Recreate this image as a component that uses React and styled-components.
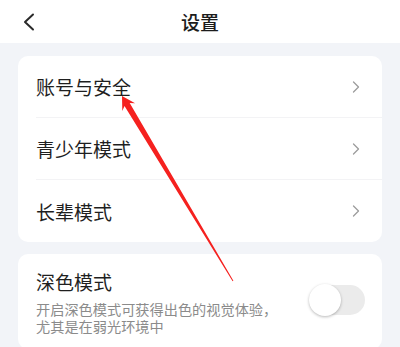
import React from "react";
import styled, { createGlobalStyle } from "styled-components";

const Global = createGlobalStyle`
  html, body { margin: 0; padding: 0; }
  body {
    background: #f2f4f8;
    font-family: "Noto Sans CJK SC", "Noto Sans", sans-serif;
    -webkit-font-smoothing: antialiased;
  }
`;

const Page = styled.div`
  position: relative;
  width: 400px;
  height: 347px;
  overflow: hidden;
  background: #f2f4f8;
`;

const Header = styled.header`
  height: 43px;
  background: #ffffff;
  display: grid;
  grid-template-columns: 60px 1fr 60px;
  align-items: center;
`;

const BackButton = styled.div`
  display: flex;
  align-items: center;
  padding-left: 22px;
  height: 43px;
`;

const Title = styled.h1`
  margin: 0;
  text-align: center;
  font-size: 19px;
  font-weight: 500;
  color: #1c1c1c;
  line-height: 43px;
`;

const Content = styled.main`
  padding: 13px 18px 0;
  display: flex;
  flex-direction: column;
  gap: 12px;
`;

const Card = styled.section`
  background: #ffffff;
  border-radius: 10px;
  overflow: hidden;
`;

const Row = styled.div`
  height: 62px;
  margin-left: 18px;
  padding-right: 22px;
  display: flex;
  align-items: center;
  justify-content: space-between;
  box-sizing: border-box;
  border-bottom: ${(p) => (p.$last ? "none" : "1px solid #f3f3f5")};
`;

const RowLabel = styled.span`
  font-size: 19px;
  color: #1f1f1f;
  line-height: 24px;
  padding-top: ${(p) => p.$shift || 0}px;
`;

const SwitchRow = styled.div`
  display: flex;
  align-items: center;
  justify-content: space-between;
  padding: 16px 17px 14px 18px;
`;

const SwitchText = styled.div`
  display: flex;
  flex-direction: column;
`;

const SwitchTitle = styled.span`
  font-size: 19px;
  color: #1f1f1f;
  line-height: 24px;
  margin-bottom: 7px;
`;

const SwitchDesc = styled.span`
  display: block;
  font-size: 14.2px;
  color: #8b8b8b;
  line-height: 17px;
  width: 250px;
`;

const Track = styled.div`
  position: relative;
  width: 55px;
  height: 30px;
  border-radius: 15px;
  background: #ebebeb;
  margin-top: -6px;
  flex-shrink: 0;
`;

const Thumb = styled.div`
  position: absolute;
  left: -1px;
  top: -1px;
  width: 32px;
  height: 32px;
  border-radius: 50%;
  background: #ffffff;
  box-shadow: 0 1px 3px rgba(0, 0, 0, 0.28);
`;

const Overlay = styled.svg`
  position: absolute;
  left: 0;
  top: 0;
  pointer-events: none;
`;

const Chevron = () => (
  <svg width="8" height="12" viewBox="0 0 8 12">
    <polyline
      points="1.5,1 6.5,6 1.5,11"
      fill="none"
      stroke="#9c9c9c"
      strokeWidth="1.3"
      strokeLinecap="round"
      strokeLinejoin="round"
    />
  </svg>
);

const rows = [
  { label: "账号与安全", shift: 0 },
  { label: "青少年模式", shift: 1 },
  { label: "长辈模式", shift: 2 },
];

export default function App() {
  return (
    <Page>
      <Global />
      <Header>
        <BackButton>
          <svg width="14" height="18" viewBox="0 0 14 18">
            <polyline
              points="11,1.5 3,9 11,16.5"
              fill="none"
              stroke="#2a2a2a"
              strokeWidth="2"
              strokeLinecap="round"
              strokeLinejoin="round"
            />
          </svg>
        </BackButton>
        <Title>设置</Title>
        <div />
      </Header>
      <Content>
        <Card>
          {rows.map((r, i) => (
            <Row key={r.label} $last={i === rows.length - 1}>
              <RowLabel $shift={r.shift}>{r.label}</RowLabel>
              <Chevron />
            </Row>
          ))}
        </Card>
        <Card>
          <SwitchRow>
            <SwitchText>
              <SwitchTitle>深色模式</SwitchTitle>
              <SwitchDesc>开启深色模式可获得出色的视觉体验，</SwitchDesc>
              <SwitchDesc>尤其是在弱光环境中</SwitchDesc>
            </SwitchText>
            <Track>
              <Thumb />
            </Track>
          </SwitchRow>
        </Card>
      </Content>
      <Overlay width="400" height="347" viewBox="0 0 400 347">
        <polygon
          points="122,96 135.1,103.2 129.7,103.0 233.4,280.8 232.6,281.2 124.5,106.1 122.3,111"
          fill="#f5211f"
        />
      </Overlay>
    </Page>
  );
}
